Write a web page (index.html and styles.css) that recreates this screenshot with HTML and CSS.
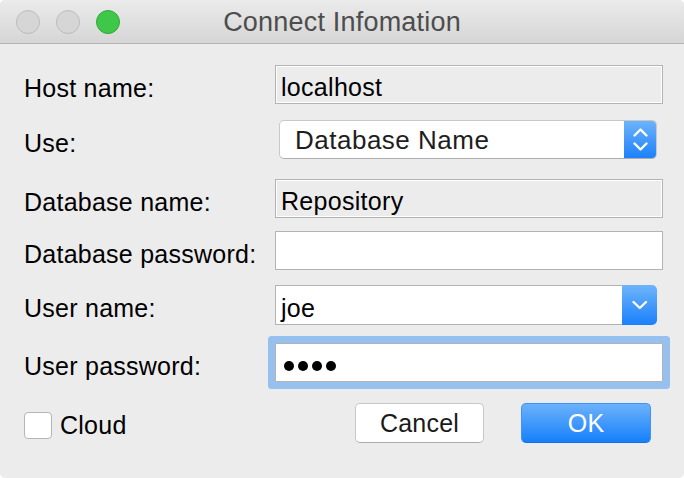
FILE: index.html
```html
<!DOCTYPE html>
<html lang="en">
<head>
<meta charset="utf-8">
<title>Connect Infomation</title>
<link rel="stylesheet" href="styles.css">
</head>
<body>
<div class="window">
  <header class="titlebar">
    <div class="lights">
      <span class="light light-off"></span>
      <span class="light light-off"></span>
      <span class="light light-zoom"></span>
    </div>
    <h1 class="title">Connect Infomation</h1>
    <div></div>
  </header>

  <form class="form">
    <label class="label">Host name:</label>
    <div class="field field-disabled">localhost</div>

    <label class="label">Use:</label>
    <div class="popup">
      <span class="popup-text">Database Name</span>
      <span class="stepper">
        <svg width="33" height="39" viewBox="0 0 33 39">
          <polyline points="10.5,15.5 16.5,9.5 22.5,15.5" class="chev"/>
          <polyline points="10.5,23.5 16.5,29.5 22.5,23.5" class="chev"/>
        </svg>
      </span>
    </div>

    <label class="label">Database name:</label>
    <div class="field field-disabled">Repository</div>

    <label class="label">Database password:</label>
    <div class="field"></div>

    <label class="label">User name:</label>
    <div class="combo">
      <div class="field combo-field">joe</div>
      <span class="combo-btn">
        <svg width="35" height="40" viewBox="0 0 35 40">
          <polyline points="11.5,17 17.8,23 24,17" class="chev"/>
        </svg>
      </span>
    </div>

    <label class="label">User password:</label>
    <div class="field field-focus">
      <span class="dot"></span><span class="dot"></span><span class="dot"></span><span class="dot"></span>
    </div>

    <div class="bottom">
      <label class="cloud">
        <span class="checkbox"></span>
        <span class="cloud-text">Cloud</span>
      </label>
      <div class="buttons">
        <button type="button" class="btn btn-cancel">Cancel</button>
        <button type="button" class="btn btn-ok">OK</button>
      </div>
    </div>
  </form>
</div>
</body>
</html>
```

FILE: styles.css
```css
html, body {
  margin: 0;
  padding: 0;
  background: #ffffff;
}

body {
  font-family: "Liberation Sans", Arial, sans-serif;
  color: #000;
}

.window {
  width: 684px;
  height: 478px;
  background: #ececec;
  border-radius: 5px;
  overflow: hidden;
  box-sizing: border-box;
}

.titlebar {
  height: 43px;
  border-bottom: 1px solid #b4b4b4;
  background: linear-gradient(#ebebeb, #d5d5d5);
  display: grid;
  grid-template-columns: 1fr auto 1fr;
  align-items: center;
}

.lights {
  display: flex;
  gap: 16px;
  padding-left: 16px;
}

.light {
  width: 24px;
  height: 24px;
  border-radius: 50%;
  box-sizing: border-box;
}

.light-off {
  background: #d6d6d6;
  border: 1px solid #bcbcbc;
}

.light-zoom {
  background: #3fc74a;
  border: 1px solid #2eaa38;
}

.title {
  margin: 0;
  padding-top: 1px;
  font-size: 27px;
  font-weight: normal;
  letter-spacing: 0.2px;
  line-height: 42px;
  color: #4d4d4d;
}

.form {
  margin: 0;
  padding: 21px 21px 0 24px;
  display: grid;
  grid-template-columns: 251px 1fr;
  grid-template-rows: 55px 59px 52px 54px 58px 60px auto;
  align-items: start;
}

.label {
  font-size: 25px;
  letter-spacing: 0.25px;
  line-height: 25px;
  padding-top: 11px;
  white-space: nowrap;
}

.field {
  box-sizing: border-box;
  height: 39px;
  border: 1px solid #b3b3b3;
  background: #fff;
  font-size: 25px;
  letter-spacing: 0.3px;
  line-height: 25px;
  padding: 9px 5px 0;
  white-space: nowrap;
}

.field-disabled {
  background: #ececec;
  box-shadow: inset 0 0 0 1px #fff;
}

.field-focus {
  border-radius: 1px;
  box-shadow: 0 0 0 7px #96c0ee;
  display: flex;
  gap: 4px;
  padding: 17px 8px 0;
}

.dot {
  width: 10px;
  height: 10px;
  border-radius: 50%;
  background: #000;
}

.popup {
  box-sizing: border-box;
  margin-left: 4px;
  width: 378px;
  height: 39px;
  display: flex;
  border: 1px solid #c8c8c8;
  border-bottom-color: #adadad;
  border-radius: 5px;
  background: #fff;
  overflow: hidden;
}

.popup-text {
  flex: 1;
  font-size: 26px;
  letter-spacing: 0.5px;
  line-height: 25px;
  padding: 7px 0 0 15px;
  color: #1e1e1e;
}

.stepper,
.combo-btn {
  display: block;
  background: linear-gradient(#6fb4fb, #1a80fc);
}

.stepper {
  width: 33px;
  margin: -1px -1px -1px 0;
  height: 39px;
}

.chev {
  fill: none;
  stroke: #fff;
  stroke-width: 2.4;
  stroke-linecap: round;
  stroke-linejoin: round;
}

.combo {
  display: flex;
  width: 382px;
  height: 40px;
}

.combo-field {
  flex: 1;
  height: 40px;
  padding-top: 10px;
  border-right: none;
}

.combo-btn {
  width: 35px;
  height: 40px;
  border-radius: 0 5px 5px 0;
}

.bottom {
  grid-column: 1 / 3;
  display: flex;
  align-items: flex-start;
  padding-right: 12px;
}

.cloud {
  display: flex;
  align-items: flex-start;
  gap: 8px;
  margin-top: 9px;
  margin-right: auto;
}

.checkbox {
  width: 28px;
  height: 27px;
  box-sizing: border-box;
  border: 1px solid #b5b5b5;
  border-radius: 4px;
  background: #fff;
}

.cloud-text {
  font-size: 25px;
  letter-spacing: 0.25px;
  line-height: 25px;
  padding-top: 1px;
}

.buttons {
  display: flex;
  gap: 37px;
}

.btn {
  box-sizing: border-box;
  width: 129px;
  height: 40px;
  border-radius: 5px;
  font-family: "Liberation Sans", Arial, sans-serif;
  font-size: 25px;
  letter-spacing: 0.2px;
  line-height: 25px;
  padding: 1px 0 0;
  margin: 0;
}

.btn-cancel {
  background: #fff;
  color: #1a1a1a;
  border: 1px solid #c8c8c8;
  border-bottom-color: #acacac;
}

.btn-ok {
  width: 130px;
  background: linear-gradient(#6cb2fb, #1680fb);
  color: #fff;
  border: 1px solid #3e94f5;
  border-bottom-color: #1870e0;
}
```
